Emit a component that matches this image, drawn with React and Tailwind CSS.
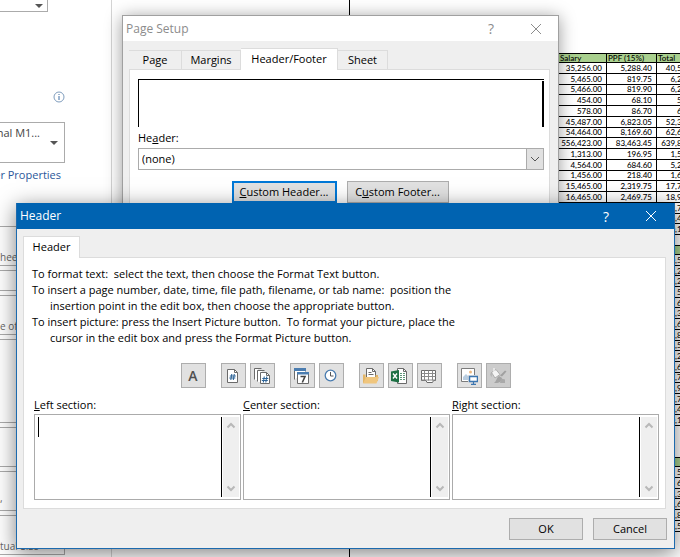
import { useState } from 'react';

const salaryRows = [
  ['35,256.00', '5,288.40', '40,544.40'],
  ['5,465.00', '819.75', '6,284.75'],
  ['5,466.00', '819.90', '6,285.90'],
  ['454.00', '68.10', '522.10'],
  ['578.00', '86.70', '664.70'],
  ['45,487.00', '6,823.05', '52,310.05'],
  ['54,464.00', '8,169.60', '62,633.60'],
  ['556,423.00', '83,463.45', '639,886.45'],
  ['1,313.00', '196.95', '1,509.95'],
  ['4,564.00', '684.60', '5,248.60'],
  ['1,456.00', '218.40', '1,674.40'],
  ['15,465.00', '2,319.75', '17,784.75'],
  ['16,465.00', '2,469.75', '18,934.75'],
  ['45,877.00', '6,881.55', '52,758.55'],
  ['5,645.00', '846.75', '6,491.75'],
  ['8,794.00', '1,319.10', '10,113.10'],
];

const tabs = [
  { name: 'Page', width: 'w-[53px]' },
  { name: 'Margins', width: 'w-[59px]' },
  { name: 'Header/Footer', width: 'w-[97px]' },
  { name: 'Sheet', width: 'w-[50px]' },
];

const sections = [
  { id: 'left', letter: 'L', rest: 'eft section:' },
  { id: 'center', letter: 'C', rest: 'enter section:' },
  { id: 'right', letter: 'R', rest: 'ight section:' },
];

const CloseIcon = () => (
  <svg viewBox="0 0 12 12" className="size-3" fill="none" stroke="currentColor" aria-hidden="true">
    <path d="M1 1l10 10M11 1L1 11" />
  </svg>
);

const Chevron = ({ up }) => (
  <svg viewBox="0 0 10 7" className="h-[7px] w-[10px]" fill="none" strokeWidth="2" stroke="currentColor" aria-hidden="true">
    <path d={up ? 'M1.5 5.5L5 2l3.5 3.5' : 'M1.5 1.5L5 5l3.5-3.5'} />
  </svg>
);

const NumberSign = ({ x, y }) => (
  <path
    d={`M${x + 2} ${y}l-1 6M${x + 4.5} ${y}l-1 6M${x} ${y + 2}h6M${x - 0.5} ${y + 4}h6`}
    stroke="#2f6598"
    strokeWidth="1.1"
  />
);

const Icon = ({ children }) => (
  <svg viewBox="0 0 18 18" className="size-[18px]" fill="none" aria-hidden="true">
    {children}
  </svg>
);

const PageNumberIcon = () => (
  <Icon>
    <path d="M3.5 2.5h7l3 3v10h-10z" fill="#fff" stroke="#6a6a6a" />
    <path d="M10.5 2.5v3h3" stroke="#6a6a6a" />
    <NumberSign x={5.8} y={7} />
  </Icon>
);

const PageCountIcon = () => (
  <Icon>
    <path d="M1.5 12.5v-11h7M4.5 14.5v-11h7" stroke="#6a6a6a" />
    <path d="M2 2h3v1H4v10H2zM5 4h4v2H7v9H5z" fill="#fff" />
    <path d="M7.5 5.5h6l3 3v8h-9z" fill="#fff" stroke="#6a6a6a" />
    <path d="M13.5 5.5v3h3" stroke="#6a6a6a" />
    <NumberSign x={9.3} y={9.5} />
  </Icon>
);

const DateIcon = () => (
  <Icon>
    <path d="M1.5 12.5v-11h11v3" fill="#fff" stroke="#6a6a6a" />
    <path d="M1 1h12v3H1z" fill="#4b7db0" />
    <path d="M4.5 5.5h11v11h-11z" fill="#fff" stroke="#6a6a6a" />
    <path d="M4 5h12v2.5H4z" fill="#4b7db0" />
    <path d="M7.5 9.5h4.5l-2.7 6" stroke="#444" strokeWidth="1.6" />
  </Icon>
);

const TimeIcon = () => (
  <Icon>
    <circle cx="8.5" cy="8.5" r="5.3" fill="#fff" stroke="#4b7db0" strokeWidth="1.3" />
    <path d="M8.5 5v4h3" stroke="#555" />
  </Icon>
);

const FilePathIcon = () => (
  <Icon>
    <path d="M4.5 10.5v-9h6l3 3v6z" fill="#fff" stroke="#6a6a6a" />
    <path d="M10.5 1.5v3h3M6.5 5.5h3M6.5 7.5h5" stroke="#6a6a6a" />
    <path d="M1 16V7.5h2.5v3h10V8H16v6z" fill="#e3b566" />
    <path d="M1 16.5l3-6.5h13l-2.5 6.5z" fill="#f0c67e" />
  </Icon>
);

const FileNameIcon = () => (
  <Icon>
    <path d="M6.5 1.5h6l3 3v12h-9z" fill="#fff" stroke="#6a6a6a" />
    <path d="M12.5 1.5v3h3" stroke="#6a6a6a" />
    <path d="M9 6.5h2M12 6.5h2M9 8.5h2M12 8.5h2M9 10.5h2M12 10.5h2M9 12.5h2M12 12.5h2" stroke="#5c9677" />
    <path d="M0 4.5L8 3v12.500L0 14z" fill="#1d7044" />
    <path d="M2 6.5l4 5M6 6.5l-4 5" stroke="#fff" strokeWidth="1.4" />
  </Icon>
);

const SheetNameIcon = () => (
  <Icon>
    <path d="M1.5 3.5h14v10h-2l-1 2H7l-1-2H1.500z" fill="#fff" stroke="#6a6a6a" />
    <path d="M1.5 6.5h14M1.5 9.5h14M1.5 13h14M4.5 3.5v10M8.5 3.5v10M12.5 3.5v10" stroke="#8a8a8a" />
  </Icon>
);

const PictureIcon = () => (
  <Icon>
    <path d="M1.5 1.5h13v13h-13z" fill="#fff" stroke="#7b7b7b" />
    <circle cx="10.5" cy="5" r="1.5" fill="#eeb980" />
    <path d="M3 13v-3l3-3 3 3v3z" fill="#b9cde0" />
    <path d="M8 8h10v10H8z" fill="#e2e2e2" />
    <path d="M9.5 9.5h8v5h-8z" fill="#fff" stroke="#3c76b0" strokeWidth="1.5" />
    <path d="M13.5 15v2M11 17.3h5" stroke="#3c76b0" strokeWidth="1.2" />
  </Icon>
);

const FormatPictureIcon = () => (
  <Icon>
    <path d="M2.5 5.500l4.500-3 4 5-5 3.500z" fill="#f4f4f4" stroke="#adadad" />
    <path d="M5 6V1" stroke="#f4f4f4" strokeWidth="1.3" />
    <path d="M2.500 5C1 6.500 1.500 9 2.500 10z" fill="#a4a4a4" />
    <path d="M16 3.500l1.500 1-4.500 5-2-1z" fill="#a0a0a0" />
    <path d="M10 9l3 2c0 3.500-3 5.500-8 5 2.500-1.500 2.500-5.500 5-7z" fill="#a4a4a4" />
    <path d="M12 11.500l4 1v3.500h-5z" fill="#a9a9a9" />
  </Icon>
);

const toolbar = [
  [{ label: 'Format Text', icon: <span className="text-[14px] font-semibold text-[#505050]">A</span> }],
  [
    { label: 'Insert Page Number', icon: <PageNumberIcon /> },
    { label: 'Insert Number of Pages', icon: <PageCountIcon /> },
  ],
  [
    { label: 'Insert Date', icon: <DateIcon /> },
    { label: 'Insert Time', icon: <TimeIcon /> },
  ],
  [
    { label: 'Insert File Path', icon: <FilePathIcon /> },
    { label: 'Insert File Name', icon: <FileNameIcon /> },
    { label: 'Insert Sheet Name', icon: <SheetNameIcon /> },
  ],
  [
    { label: 'Insert Picture', icon: <PictureIcon /> },
    { label: 'Format Picture', icon: <FormatPictureIcon />, disabled: true },
  ],
];

const SalaryTable = ({ rows, className }) => (
  <table className={`table-fixed border-collapse font-['Lato','Noto_Sans',sans-serif] text-[8px] leading-none text-black ${className}`}>
    <thead>
      <tr className="bg-[#a9d08e] text-left">
        <th className="w-[49px] border border-black p-0 pl-[2px] font-medium">Salary</th>
        <th className="w-[50px] border border-black p-0 pl-px font-medium">PPF (15%)</th>
        <th className="w-[50px] border border-black p-0 pl-px font-medium">Total</th>
      </tr>
    </thead>
    <tbody>
      {rows.map((row) => (
        <tr key={row[0]} className="text-right font-medium">
          {row.map((cell) => (
            <td key={cell} className="border border-black p-0 pr-1">{cell}</td>
          ))}
        </tr>
      ))}
    </tbody>
  </table>
);

const DownArrow = ({ className }) => (
  <svg viewBox="0 0 8 4" className={`h-1 w-2 shrink-0 ${className}`} aria-hidden="true">
    <path d="M0 0h8L4 4z" fill="#555" />
  </svg>
);

const PrintSettings = () => (
  <aside className="w-28 shrink-0 overflow-hidden border-r border-[#d4d4d4] text-[11px] text-[#666]">
    <div className="flex h-3 w-12 justify-end border-r border-b border-[#ababab] pr-1">
      <DownArrow className="mt-1" />
    </div>
    <div className="mt-[79px] flex w-[65px] justify-end">
      <svg viewBox="0 0 12 12" className="size-3" fill="none" stroke="#7f9dbd" aria-hidden="true">
        <circle cx="6" cy="6" r="5" />
        <path d="M6 5v4M6 3v1" stroke="#3f6ea5" />
      </svg>
    </div>
    <button type="button" className="mt-[19px] flex h-[41px] w-[65px] justify-end border border-l-0 border-[#ababab] pr-[6px] text-[#444]">
      <span className="mt-[2px] self-start whitespace-nowrap">nal M1...</span>
      <DownArrow className="ml-[10px] self-center" />
    </button>
    <div className="mt-1 flex w-[61px] justify-end">
      <a href="#properties" className="whitespace-nowrap leading-4 text-[#2b579a]">Printer Properties</a>
    </div>
    <div className="mt-[43px] flex w-[65px] flex-col gap-1 text-[10px] leading-4">
      <div className="flex h-10 items-end border border-l-0 border-[#ababab]">heets</div>
      <div className="h-[21px] border border-l-0 border-[#ababab]" />
      <div className="flex h-10 items-end border border-l-0 border-[#ababab]">e of</div>
      <div className="h-[84px] border border-l-0 border-[#ababab]" />
      <div className="h-10 border border-l-0 border-[#ababab]" />
      <div className="flex h-10 items-end border border-l-0 border-[#ababab] pb-1">,</div>
      <div className="flex h-10 items-end border border-l-0 border-[#ababab] whitespace-nowrap">tual Size</div>
    </div>
  </aside>
);

const PageSetupDialog = ({ activeTab, onTabChange }) => (
  <section className="absolute top-[15px] right-[121px] left-[122px] h-80 border border-[#a0a0a0] bg-[#efefef] shadow-[0_2px_16px_rgba(0,0,0,0.4)]">
    <header className="flex h-[25px] items-center bg-white pr-4 pl-[3px] text-[#8c8c8c]">
      <h2 className="flex-1 text-[12px]">Page Setup</h2>
      <button type="button" aria-label="Help" className="mr-9 text-[14px]">?</button>
      <button type="button" aria-label="Close"><CloseIcon /></button>
    </header>
    <div className="mt-[7px] mr-2 ml-[6px]">
      <div role="tablist" className="flex h-[21px] items-end">
        {tabs.map(({ name, width }) => (
          <button
            key={name}
            type="button"
            role="tab"
            aria-selected={activeTab === name}
            onClick={() => onTabChange(name)}
            className={`border-t border-r border-[#dcdcdc] ${width} ${
              activeTab === name ? 'relative -mb-px h-[22px] bg-white' : 'h-[19px]'
            }`}
          >
            {name}
          </button>
        ))}
      </div>
      <div className="h-64 border border-[#dcdcdc] bg-white pt-[9px] pr-[5px] pl-2">
        <div className="flex h-12 border-t border-l border-black pt-px">
          <div className="ml-auto w-[2px] bg-black" />
        </div>
        <label htmlFor="header-select" className="mt-[3px] block leading-4">He<u>a</u>der:</label>
        <div className="relative mt-[2px]">
          <select id="header-select" className="h-[22px] w-full appearance-none border border-[#ababab] bg-white pl-[3px]">
            <option>(none)</option>
          </select>
          <span className="pointer-events-none absolute inset-y-0 right-0 flex w-[18px] items-center justify-center border border-[#ababab] bg-[#e1e1e1] text-[#555]">
            <svg viewBox="0 0 10 6" className="h-[6px] w-[10px]" fill="none" stroke="currentColor" aria-hidden="true">
              <path d="M1 1l4 4 4-4" />
            </svg>
          </span>
        </div>
        <div className="mt-[11px] flex justify-center gap-[10px] pr-[2px]">
          <button type="button" className="h-[22px] w-[105px] border-2 border-[#0078d7] bg-[#e1e1e1]"><u>C</u>ustom Header...</button>
          <button type="button" className="h-[22px] w-[102px] border border-[#adadad] bg-[#e1e1e1]">C<u>u</u>stom Footer...</button>
        </div>
      </div>
    </div>
  </section>
);

const HeaderDialog = () => (
  <section className="absolute top-[203px] right-[5px] left-4 border border-t-0 border-[#1c6aae] bg-[#efefef] shadow-[0_4px_20px_rgba(0,0,0,0.5)]">
    <header className="flex h-[26px] items-center bg-[#0063b1] pr-[17px] pl-[3px] text-white">
      <h2 className="flex-1 text-[12px]">Header</h2>
      <button type="button" aria-label="Help" className="mr-9 text-[14px]">?</button>
      <button type="button" aria-label="Close"><CloseIcon /></button>
    </header>
    <div className="mt-[7px] mr-2 ml-[6px]">
      <div role="tablist" className="flex">
        <button type="button" role="tab" aria-selected="true" className="relative -mb-px h-[22px] w-[57px] border border-b-0 border-[#dcdcdc] bg-white">
          Header
        </button>
      </div>
      <div className="border border-[#dcdcdc] bg-white pr-[6px] pb-2 pl-2">
        <div className="pt-2 leading-4 whitespace-pre">
          <p>To format text:  select the text, then choose the Format Text button.</p>
          <p>To insert a page number, date, time, file path, filename, or tab name:  position the</p>
          <p className="pl-[18px]">insertion point in the edit box, then choose the appropriate button.</p>
          <p>To insert picture: press the Insert Picture button.  To format your picture, place the</p>
          <p className="pl-[18px]">cursor in the edit box and press the Format Picture button.</p>
        </div>
        <div className="mt-[17px] flex justify-center gap-[15px]">
          {toolbar.map((group) => (
            <div key={group[0].label} className="flex gap-1">
              {group.map(({ label, icon, disabled }) => (
                <button
                  key={label}
                  type="button"
                  aria-label={label}
                  disabled={disabled}
                  className="flex size-[25px] items-center justify-center border border-[#adadad] bg-[#e1e1e1] disabled:bg-[#cccccc]"
                >
                  {icon}
                </button>
              ))}
            </div>
          ))}
        </div>
        <div className="mt-[9px] grid grid-cols-3 gap-[2px] pl-[2px]">
          {sections.map(({ id, letter, rest }) => (
            <div key={id}>
              <label htmlFor={`${id}-section`} className="block leading-4"><u>{letter}</u>{rest}</label>
              <div className="relative mt-px flex h-[86px] border border-[#ababab] p-[2px] pr-px">
                <textarea id={`${id}-section`} className="min-w-0 flex-1 resize-none border-r border-black px-[2px] outline-none" />
                <div className="ml-px flex w-4 flex-col items-center justify-between bg-[#efefef] py-[5px] text-[#b8b8b8]">
                  <Chevron up />
                  <Chevron />
                </div>
                {id === 'left' && <span className="absolute top-[2px] left-[3px] h-5 w-px bg-black" />}
              </div>
            </div>
          ))}
        </div>
      </div>
    </div>
    <footer className="flex justify-end gap-[10px] pt-[9px] pr-[7px] pb-2">
      <button type="button" className="h-[22px] w-[74px] border border-[#adadad] bg-[#e1e1e1]">OK</button>
      <button type="button" className="h-[22px] w-[74px] border border-[#adadad] bg-[#e1e1e1]">Cancel</button>
    </footer>
  </section>
);

const App = () => {
  const [activeTab, setActiveTab] = useState('Header/Footer');

  return (
    <main className="relative flex h-screen overflow-hidden bg-white font-['Open_Sans',sans-serif] text-[11px] text-black">
      <PrintSettings />
      <div className="min-w-0 flex-1 overflow-hidden pl-[237px]">
        <div className="h-full border-l border-black pt-[53px] pl-[207px]">
          <SalaryTable rows={salaryRows} className="h-[182px] w-[149px]" />
          <SalaryTable rows={salaryRows} className="mt-[10px] h-[181px] w-[149px]" />
          <SalaryTable rows={salaryRows.slice(3, 9)} className="mt-[31px] h-[75px] w-[149px]" />
        </div>
      </div>
      <PageSetupDialog activeTab={activeTab} onTabChange={setActiveTab} />
      <HeaderDialog />
    </main>
  );
};

export default App;
